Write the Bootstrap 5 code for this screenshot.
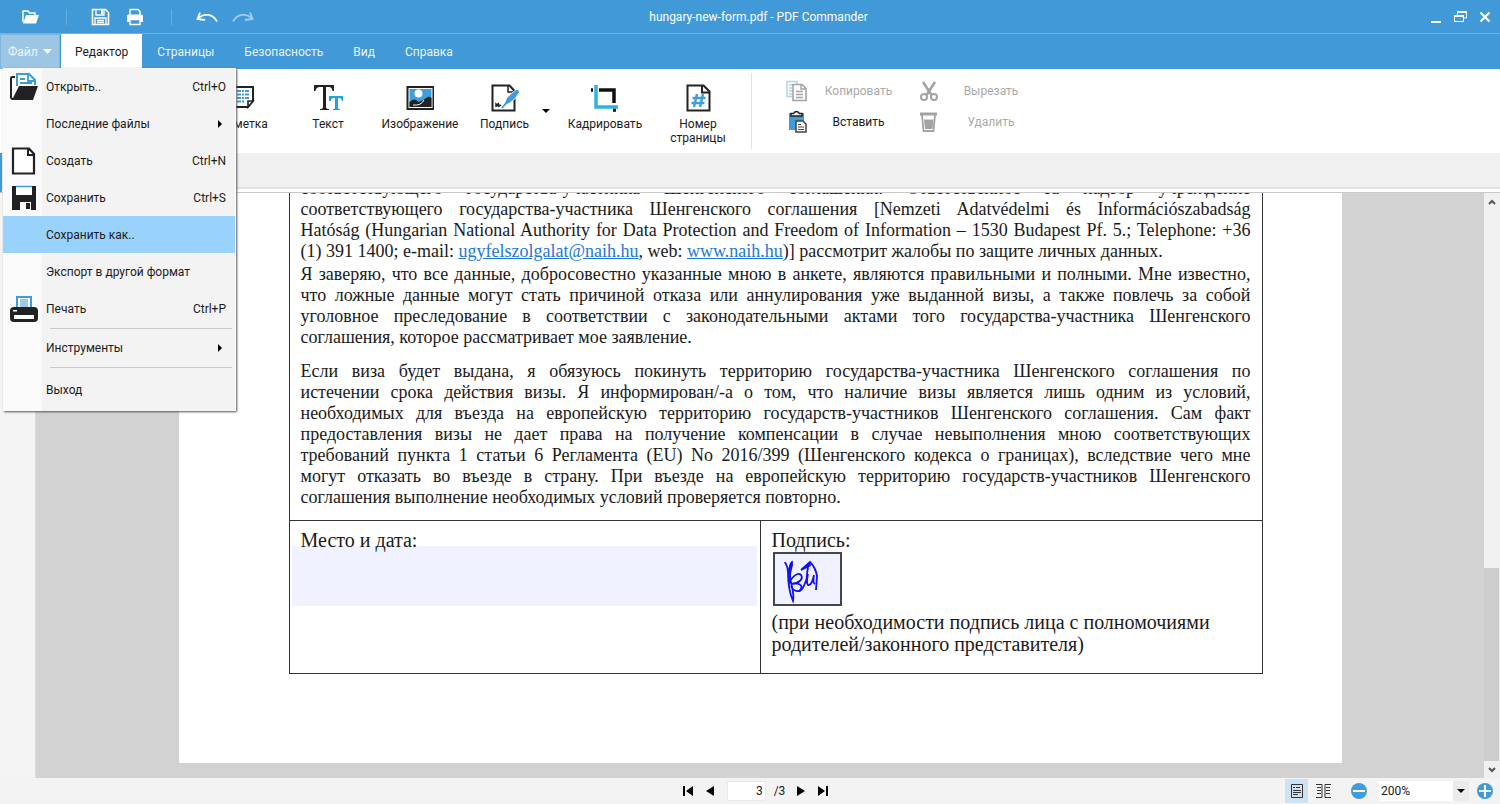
<!DOCTYPE html>
<html lang="ru">
<head>
<meta charset="utf-8">
<meta name="viewport" content="width=device-width, initial-scale=1">
<title>hungary-new-form.pdf - PDF Commander</title>
<link href="https://cdn.jsdelivr.net/npm/bootstrap@5.3.0/dist/css/bootstrap.min.css" rel="stylesheet">
<style>
  :root { --brand: #4199d8; --ink: #1b1b1b; }
  body { font-family: Roboto, "Liberation Sans", sans-serif; font-size: 12px; line-height: 14px; color: var(--ink); }
  svg { display: block; flex: none; }
  button, select, input { font: inherit; color: inherit; }
  .bare { background: none; border: 0; padding: 0; }

  /* title bar */
  .titlebar { background: var(--brand); height: 34px; border-bottom: 1px solid #6fb3e3; color: #fff; display: grid; grid-template-columns: 1fr auto 1fr; padding: 0 5px 0 22px; }
  .rule-v { width: 1px; height: 16px; margin: 0 24px 0 27px; background: #6aaee0; }
  .titlebar .faded { opacity: .5; }

  /* tabs */
  .tabbar { background: var(--brand); height: 35px; }
  .tabbar a, .tabbar button { color: #eaf4fc; text-decoration: none; padding: 0 15px; display: flex; align-items: center; }
  .tabbar .file-tab { background: #9cc6e3; border: 1px solid #7db5df; padding: 0 7px; gap: 5px; width: 60px; margin-right: 1px; }
  .tabbar .current { background: #fff; color: var(--ink); padding: 0 14px; }

  /* file menu */
  .file-menu { position: absolute; left: 3px; top: 68px; width: 233px; z-index: 10; border-right: 1px solid #fff; background: linear-gradient(90deg, #fafafa 39px, #f3f3f3 39px); box-shadow: 1px 1px 2px #555; }
  .file-menu button { width: 100%; height: 37px; display: flex; align-items: center; text-align: left; padding-right: 9px; }
  .file-menu .glyph { width: 43px; padding-left: 6px; flex: none; }
  .file-menu .chosen { background: #99d3fd; }
  .file-menu hr { margin: 1px 3px 0 47px; border-color: #c8c8c8; opacity: 1; }
  .file-menu .last-item { height: 43px; }

  /* ribbon */
  .ribbon { height: 84px; background: #fff; padding-left: 202px; }
  .tool { display: flex; flex-direction: column; align-items: center; gap: 5px; padding-top: 15px; }
  .w-a { width: 84px; } .w-b { width: 100px; } .w-c { width: 69px; } .w-d { width: 104px; } .w-e { width: 82px; }
  .drop { width: 14px; }
  .divider { width: 1px; height: 76px; margin: 4px 34px 0 12px; background: #e2e2e2; }
  .clip { display: grid; grid-template-columns: 120px 120px; grid-auto-rows: 31px; column-gap: 13px; padding-top: 6px; }
  .clip button { display: flex; align-items: center; gap: 4px; }
  .clip button span { flex: 1; text-align: center; }
  .clip button:disabled { color: #a9a9a9; }
  .subbar { height: 39px; background: #f0f0f0; border-left: 2px solid var(--brand); }
  .subbar-edge { height: 5px; border-top: 2px solid #e2e2e2; background: #fff; }
  .subline { height: 1px; background: #c9c9c9; }

  /* document */
  .rail { width: 36px; background: #f4f4f4; border-right: 1px solid #dcdcdc; }
  .canvas { background: #d2d2d2; padding-bottom: 15px; }
  .paper { width: 1163px; background: #fff; padding: 0 79px 89px 110px; margin: 0 auto; font-family: "Liberation Serif", "Times New Roman", serif; color: #1a1a1a; }
  .form-table { width: 100%; border-collapse: collapse; table-layout: fixed; }
  .form-table .place-col { width: 471px; }
  .form-table td { border: 1px solid #333; padding: 8px 11px; vertical-align: top; }
  .form-table .statement { font-size: 18px; line-height: 21px; padding-bottom: 12px; }
  .form-table p { margin: 0; }
  .statement p + p { margin-top: 2px; }
  .statement p.spaced { margin-top: 13px; }
  .statement .ln { display: block; text-align-last: justify; white-space: nowrap; }
  .form-table a { color: #1d78d6; }
  .form-table label { position: relative; display: block; }
  .field { display: block; width: calc(100% + 17px); height: 60px; margin: -5px -9px 0 -9px; background: #f0f3ff; border: 0; }
  .signature { display: block; width: 69px; height: 54px; margin: 1px 0 5px 1px; border: 2px solid #45454d; background: #f0f3ff; padding: 0; }
  .form-table .row-sign td { height: 153px; font-size: 20px; line-height: 22px; }

  /* scrollbar */
  .scroller { width: 16px; background: #f0f0f0; }
  .scroller button { height: 17px; display: flex; align-items: center; justify-content: center; }
  .thumb { height: 35%; background: #cdcdcd; margin-right: 1px; }

  /* status bar */
  .statusbar { height: 26px; background: #f3f3f3; display: grid; grid-template-columns: 1fr auto 1fr; padding: 0 7px 0 19px; }
  .page-no { width: 39px; height: 20px; border: 1px solid #e9e9e9; background: #fff; text-align: right; padding: 0 2px; }
  .view-btn { width: 23px; height: 24px; display: flex; align-items: center; justify-content: center; }
  .view-btn.on { background: #cfe2f2; }
  .zoom-list { width: 90px; height: 20px; border: 0; padding: 0 2px; appearance: none; border-radius: 0;
    background: url("data:image/svg+xml,%3Csvg xmlns='http://www.w3.org/2000/svg' width='16' height='20'%3E%3Cpath fill='%23ebebeb' d='M0 0h16v20H0z'/%3E%3Cpath d='M4 8h8l-4 4z'/%3E%3C/svg%3E") right / 16px 20px no-repeat #fff; }
</style>
</head>
<body class="vh-100 d-flex flex-column overflow-hidden position-relative">

<header class="titlebar flex-shrink-0 align-items-center">
  <div class="d-flex align-items-center">
    <button class="bare" aria-label="Открыть"><svg width="17" height="14" viewBox="0 0 17 14"><path d="M1 12V1h5l1.500 2H13v2" fill="none" stroke="#fff" stroke-width="1.500"/><path d="M4 5h13l-3 8.500H1z" fill="#fff"/></svg></button>
    <span class="rule-v"></span>
    <button class="bare" aria-label="Сохранить"><svg width="19" height="18" viewBox="0 0 19 18"><path d="M1.500 1.500h13l3 3v12h-16z" fill="none" stroke="#fff" stroke-width="1.600"/><path d="M5 2v5h8V2M4 16v-6h11v6M6 12.500h7M6 14.500h7" fill="none" stroke="#fff" stroke-width="1.300"/><path d="M10 2h2v4h-2z" fill="#fff"/></svg></button>
    <button class="bare ms-3" aria-label="Печать"><svg width="18" height="18" viewBox="0 0 18 18"><path d="M4 7V1.500h8l2 2V7" fill="none" stroke="#fff" stroke-width="1.500"/><path d="M2.500 6.500h13A1.500 1.500 0 0 1 17 8v6h-3v-3H4v3H1V8a1.500 1.500 0 0 1 1.500-1.500z" fill="#fff"/><path d="M4 11.500h10v5H4z" fill="none" stroke="#fff" stroke-width="1.500"/></svg></button>
    <span class="rule-v"></span>
    <button class="bare" aria-label="Отменить"><svg width="23" height="14" viewBox="0 0 23 14"><path d="M2 8.500c6-6 15-4.500 19 3M4 2.500L1.500 9l7.500 1" fill="none" stroke="#fff" stroke-width="1.800"/></svg></button>
    <button class="bare faded ms-2 ps-1" aria-label="Повторить"><svg width="23" height="14" viewBox="0 0 23 14"><path d="M21 8.500C15 2.500 6 4 2 11.500M19 2.500L21.500 9l-7.500 1" fill="none" stroke="#fff" stroke-width="1.800"/></svg></button>
  </div>
  <div>hungary-new-form.pdf - PDF Commander</div>
  <div class="d-flex align-items-center justify-content-end gap-2 pe-1">
    <button class="bare me-1" aria-label="Свернуть"><svg width="12" height="14" viewBox="0 0 12 14"><path d="M1 11h10v2H1z" fill="#fff"/></svg></button>
    <button class="bare me-1" aria-label="Восстановить"><svg width="13" height="12" viewBox="0 0 13 12"><path d="M3.500 4V1h9v6H9.500M.5 4.500h9v6h-9z" fill="none" stroke="#fff"/><path d="M3 0h10v2H3zM0 4h10v2H0z" fill="#fff"/></svg></button>
    <button class="bare" aria-label="Закрыть"><svg width="12" height="12" viewBox="0 0 12 12"><path d="M1.500 1.500l9 9M10.500 1.500l-9 9" stroke="#fff" stroke-width="2.200"/></svg></button>
  </div>
</header>

<nav class="tabbar flex-shrink-0 d-flex">
  <button class="bare file-tab" aria-expanded="true">Файл <svg width="9" height="5" viewBox="0 0 9 5"><path d="M0 0h9L4.500 5z" fill="#fff"/></svg></button>
  <a class="current" href="#">Редактор</a>
  <a href="#">Страницы</a>
  <a href="#">Безопасность</a>
  <a href="#">Вид</a>
  <a href="#">Справка</a>
</nav>

<div class="file-menu">
  <button class="bare"><span class="glyph"><svg width="30" height="30" viewBox="0 0 30 30"><path d="M6 5H3.500Q2 5 2 6.500V25q0 2 2 2" fill="none" stroke="#222" stroke-width="2"/><path d="M8 14V2h12l6 6v5" fill="#fff" stroke="#3f9bdb" stroke-width="2"/><path d="M19 2v7h7M11 7h5M11 11h12" fill="none" stroke="#3f9bdb" stroke-width="1.800"/><path d="M10 14h19l-5 14H3z" fill="#222"/></svg></span>Открыть..<span class="ms-auto">Ctrl+O</span></button>
  <button class="bare"><span class="glyph"></span>Последние файлы<svg class="ms-auto me-1" width="4" height="8"><path d="M0 0l4 4-4 4z"/></svg></button>
  <button class="bare"><span class="glyph"><svg width="30" height="28" viewBox="0 0 30 28"><path d="M4 1.500h16l5 5.500v19.500H4z" fill="#fff" stroke="#222" stroke-width="2.200"/><path d="M19 2v6h6" fill="none" stroke="#222" stroke-width="2"/></svg></span>Создать<span class="ms-auto">Ctrl+N</span></button>
  <button class="bare"><span class="glyph"><svg width="30" height="26" viewBox="0 0 30 26"><path d="M3 1h24v24H3z" fill="#222"/><path d="M7 1h16v9H7z" fill="#fff"/><path d="M7 1.500h16" stroke="#3f9bdb" stroke-width="1.500"/><path d="M11 17h11v8H11z" fill="#fff"/><path d="M17 18h4v6h-4z" fill="#222"/></svg></span>Сохранить<span class="ms-auto">Ctrl+S</span></button>
  <button class="bare chosen"><span class="glyph"></span>Сохранить как..</button>
  <button class="bare"><span class="glyph"></span>Экспорт в другой формат</button>
  <button class="bare"><span class="glyph"><svg width="30" height="28" viewBox="0 0 30 28"><path d="M8 14V2h14v12" fill="#fff" stroke="#3f9bdb" stroke-width="2"/><path d="M11 4h8v9h-8z" fill="#9bcbec"/><rect x="1" y="12" width="28" height="15" rx="4" fill="#222"/><path d="M5 20h20v4H5z" fill="#fff"/><path d="M4 15h4v1.500H4z" fill="#fff"/></svg></span>Печать<span class="ms-auto">Ctrl+P</span></button>
  <hr>
  <button class="bare"><span class="glyph"></span>Инструменты<svg class="ms-auto me-1" width="4" height="8"><path d="M0 0l4 4-4 4z"/></svg></button>
  <hr>
  <button class="bare last-item"><span class="glyph"></span>Выход</button>
</div>

<div class="ribbon flex-shrink-0 d-flex">
  <button class="bare tool w-a"><svg width="28" height="28" viewBox="0 0 28 28"><path d="M4 3h19v14l-5 6H4z" fill="#fff" stroke="#222" stroke-width="2"/><path d="M23 17h-5v6z" fill="#fff" stroke="#222" stroke-width="1.600"/><path d="M7 7h13M7 10.500h12M7 14h13M7 17.500h8" stroke="#3f9bdb" stroke-width="1.800" stroke-dasharray="4 1 2 1"/></svg>Заметка</button>
  <button class="bare tool w-a"><svg width="32" height="28" viewBox="0 0 32 28"><path d="M2 1h20v6h-1.500q-.5-4-3.500-4h-3v20q0 2 3 2v1H8v-1q3 0 3-2V3H8Q4 3 3.500 7H2z" fill="#222"/><path d="M17 12h14v5h-1q-.5-3-3-3h-1v10q0 1 2 1v1h-7v-1q2 0 2-1V14h-1q-3 0-3 3h-2z" fill="#22a3e0"/></svg>Текст</button>
  <button class="bare tool w-b"><svg width="28" height="28" viewBox="0 0 28 28"><path d="M1.500 3h26v22h-26z" fill="#fff" stroke="#222" stroke-width="2"/><path d="M3.500 5h22v18h-22z" fill="#3b9fe0"/><circle cx="12.500" cy="9.500" r="4" fill="#fff"/><path d="M3.500 18q5-5 9 0 6-2 9-5 2-1 4 1v9h-22z" fill="#222"/><path d="M7 21q8 1 11-5" fill="none" stroke="#fff"/></svg>Изображение</button>
  <button class="bare tool w-c"><svg width="30" height="28" viewBox="0 0 30 28"><path d="M2.500 1.500h17l5 5.500v19.500h-22z" fill="#fff" stroke="#222" stroke-width="2"/><path d="M18 2v6h6M6 23v-3l2 2v-3l1.500 3 1.500-1" fill="none" stroke="#222" stroke-width="1.500"/><path d="M14 22l2.500-8L26 5.500q3.500-.5 3.500 2.500-4 8-10 11z" fill="#3f9bdb" stroke="#fff" stroke-width=".8"/><path d="M12 24l5-6" stroke="#3f9bdb" stroke-width="1.800"/></svg>Подпись</button>
  <button class="bare drop" aria-label="Варианты подписи"><svg class="mx-auto" width="8" height="4"><path d="M0 0h8L4 4z"/></svg></button>
  <button class="bare tool w-d"><svg width="28" height="28" viewBox="0 0 28 28"><path d="M0 6h2M8 6h15v13M22 26h3" fill="none" stroke="#111" stroke-width="3.500"/><path d="M5 1v22h22" fill="none" stroke="#2fb1e3" stroke-width="3.500"/></svg>Кадрировать</button>
  <button class="bare tool w-e"><svg width="26" height="28" viewBox="0 0 26 28"><path d="M2.500 1.500h16l6 6v19h-22z" fill="#fff" stroke="#222" stroke-width="2"/><path d="M17 2v6.500h7" fill="none" stroke="#222" stroke-width="2"/><path d="M12 10l-3 13M18 10l-3 13M7.500 14h13M6.500 19h13" fill="none" stroke="#3f9bdb" stroke-width="2.400"/></svg>Номер страницы</button>
  <div class="divider"></div>
  <div class="clip">
    <button class="bare" disabled><svg width="21" height="22" viewBox="0 0 21 22"><path d="M7 16.500H1V1.500h10v3M3 5h4M3 8h3M3 11h3M3 14h3" fill="none" stroke="#a9d3f0" stroke-width="1.400"/><path d="M7 4.500h9l4 4v12H7z" fill="#fff" stroke="#a3a3a3" stroke-width="1.600"/><path d="M15 5v4h5M10 11.500h7M10 14.500h7M10 17.500h7" fill="none" stroke="#a3a3a3" stroke-width="1.400"/></svg><span>Копировать</span></button>
    <button class="bare" disabled><svg width="20" height="22" viewBox="0 0 20 22"><path d="M4 2l8.500 13M16 2L7.500 15" stroke="#a3a3a3" stroke-width="2.600"/><circle cx="5" cy="17" r="3" fill="none" stroke="#a3a3a3" stroke-width="2"/><circle cx="15" cy="17" r="3" fill="none" stroke="#a3a3a3" stroke-width="2"/></svg><span>Вырезать</span></button>
    <button class="bare"><svg width="21" height="23" viewBox="0 0 21 23"><path d="M3 3h15v17H3z" fill="#3f9bdb"/><path d="M5 6V3.500h2.500q3-4 6 0H16V6z" fill="#fff" stroke="#222" stroke-width="1.500"/><path d="M10 11h7l3 3v8H10z" fill="#fff" stroke="#444" stroke-width="1.500"/><path d="M12 14.500h3M12 17h6M12 19.500h6" stroke="#444" stroke-width="1.200"/></svg><span>Вставить</span></button>
    <button class="bare" disabled><svg width="20" height="22" viewBox="0 0 20 22"><path d="M1 1.500h17v3H1z" fill="#a3a3a3"/><path d="M3 4l1.500 16h10L16 4" fill="none" stroke="#a3a3a3" stroke-width="1.800"/><path d="M5 8.500h9.500l-1 9.500H6z" fill="#a3a3a3"/></svg><span>Удалить</span></button>
  </div>
</div>
<div class="subbar flex-shrink-0 d-flex flex-column justify-content-end"><div class="subbar-edge"></div></div>
<div class="subline flex-shrink-0"></div>

<main class="d-flex flex-grow-1 overflow-hidden">
  <div class="rail flex-shrink-0"></div>
  <div class="canvas flex-grow-1 d-flex flex-column justify-content-end overflow-hidden">
    <div class="paper">
      <table class="form-table">
        <colgroup><col class="place-col"><col></colgroup>
        <tr><td colspan="2" class="statement">
          <p><span class="ln">соответствующего государства-участника Шенгенского соглашения. Ответственное за надзор учреждение</span>
          <span class="ln">соответствующего государства-участника Шенгенского соглашения [Nemzeti Adatvédelmi és Információszabadság</span>
          <span class="ln">Hatóság (Hungarian National Authority for Data Protection and Freedom of Information – 1530 Budapest Pf. 5.; Telephone: +36</span>
          (1) 391 1400; e-mail: <a href="#">ugyfelszolgalat@naih.hu</a>, web: <a href="#">www.naih.hu</a>)] рассмотрит жалобы по защите личных данных.</p>
          <p><span class="ln">Я заверяю, что все данные, добросовестно указанные мною в анкете, являются правильными и полными. Мне известно,</span>
          <span class="ln">что ложные данные могут стать причиной отказа или аннулирования уже выданной визы, а также повлечь за собой</span>
          <span class="ln">уголовное преследование в соответствии с законодательными актами того государства-участника Шенгенского</span>
          соглашения, которое рассматривает мое заявление.</p>
          <p class="spaced"><span class="ln">Если виза будет выдана, я обязуюсь покинуть территорию государства-участника Шенгенского соглашения по</span>
          <span class="ln">истечении срока действия визы. Я информирован/-а о том, что наличие визы является лишь одним из условий,</span>
          <span class="ln">необходимых для въезда на европейскую территорию государств-участников Шенгенского соглашения. Сам факт</span>
          <span class="ln">предоставления визы не дает права на получение компенсации в случае невыполнения мною соответствующих</span>
          <span class="ln">требований пункта 1 статьи 6 Регламента (EU) No 2016/399 (Шенгенского кодекса о границах), вследствие чего мне</span>
          <span class="ln">могут отказать во въезде в страну. При въезде на европейскую территорию государств-участников Шенгенского</span>
          соглашения выполнение необходимых условий проверяется повторно.</p>
        </td></tr>
        <tr class="row-sign">
          <td><label for="place">Место и дата:</label><input class="field" id="place" type="text"></td>
          <td><label for="sign">Подпись:</label>
            <button class="signature" id="sign" type="button" aria-label="Подпись"><svg width="65" height="50" viewBox="0 0 65 50"><path d="M10 8c1 3 3 4 3 10 0 10 1 20 5 29 2-8-3-18-3-26 0-5 3-9 2-13-3 2-3 12-3 22 3-8 9-12 12-9 3 4-3 9-10 9 7-2 12 1 10 5-2 4-8 2-10-3M25 37c4-2 6-10 8-17-1 5-2 9 0 11 3 1 5-5 6-10-1 5-1 8 1 9M33 13c-1 6-2 12-1 16M26 16l9-8c3 3 6 8 7 14l-1 14" fill="none" stroke="#1010f0" stroke-width="1.800"/><path d="M26 17l9-9 1 4z" fill="#1010f0"/></svg></button>
            <p>(при необходимости подпись лица с полномочиями родителей/законного представителя)</p></td>
        </tr>
      </table>
    </div>
  </div>
  <div class="scroller flex-shrink-0 d-flex flex-column">
    <button class="bare" aria-label="Вверх"><svg width="8" height="6" viewBox="0 0 8 6"><path d="M1 5l3-3 3 3" fill="none" stroke="#555" stroke-width="2"/></svg></button>
    <div class="flex-grow-1 d-flex flex-column justify-content-end"><div class="thumb"></div></div>
    <button class="bare" aria-label="Вниз"><svg width="8" height="6" viewBox="0 0 8 6"><path d="M1 1l3 3 3-3" fill="none" stroke="#555" stroke-width="2"/></svg></button>
  </div>
</main>

<footer class="statusbar flex-shrink-0 align-items-center">
  <span></span>
  <div class="d-flex align-items-center">
    <button class="bare" aria-label="Первая страница"><svg width="11" height="10"><path d="M0 0h2v10H0zM10 0v10L3 5z"/></svg></button>
    <button class="bare ms-2 ps-1 me-2 pe-1" aria-label="Предыдущая страница"><svg width="9" height="10"><path d="M8 0v10L0 5z"/></svg></button>
    <input class="page-no me-2" value="3" aria-label="Страница"><span>/3</span>
    <button class="bare ms-2 ps-1" aria-label="Следующая страница"><svg width="9" height="10"><path d="M0 0v10l8-5z"/></svg></button>
    <button class="bare ms-2 ps-1" aria-label="Последняя страница"><svg width="11" height="10"><path d="M0 0v10l7-5zM8 0h2v10H8z"/></svg></button>
  </div>
  <div class="d-flex align-items-center justify-content-end gap-2">
    <div class="d-flex gap-1 me-2">
      <button class="bare view-btn on" aria-label="Одна страница"><svg width="12" height="14" viewBox="0 0 12 14"><path d="M.5.5h11v13H.5z" fill="none" stroke="#333"/><path d="M2 3.500h2M5 3.500h4M2 6.500h8M2 8.500h8M2 10.500h5" stroke="#333"/></svg></button>
      <button class="bare view-btn" aria-label="Две страницы"><svg width="15" height="14" viewBox="0 0 15 14"><path d="M0 .5h6v13H0M15 .5H9v13h6M1 3.500h4M1 6.500h4M1 9.500h4M10 3.500h4M10 6.500h4M10 9.500h4" fill="none" stroke="#333"/></svg></button>
    </div>
    <button class="bare me-1" aria-label="Уменьшить"><svg width="16" height="16"><circle cx="8" cy="8" r="8" fill="#3f9bdb"/><path d="M2 7h12v2H2z" fill="#fff"/></svg></button>
    <select class="zoom-list" aria-label="Масштаб"><option>200%</option></select>
    <button class="bare" aria-label="Увеличить"><svg width="16" height="16"><circle cx="8" cy="8" r="8" fill="#3f9bdb"/><path d="M2 7h12v2H2zM7 2h2v12H7z" fill="#fff"/></svg></button>
  </div>
</footer>

<script src="https://cdn.jsdelivr.net/npm/bootstrap@5.3.0/dist/js/bootstrap.bundle.min.js"></script>
</body>
</html>
